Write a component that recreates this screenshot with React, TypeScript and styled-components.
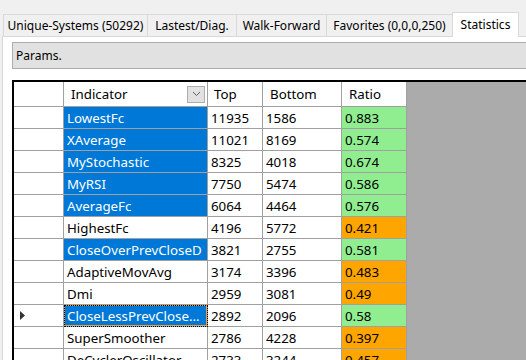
import { FC } from "react";
import styled, { createGlobalStyle } from "styled-components";

const GlobalStyle = createGlobalStyle`
  html, body {
    margin: 0;
    padding: 0;
  }
  body {
    width: 526px;
    height: 360px;
    overflow: hidden;
    background: #f0f0f0;
    font-family: "Noto Sans", "Open Sans", sans-serif;
    font-size: 12px;
    color: #000;
  }
`;

const Window = styled.div`
  width: 560px;
  height: 360px;
  display: flex;
  flex-direction: column;
`;

const TabStrip = styled.div`
  display: flex;
  align-items: flex-end;
  height: 36px;
  padding-left: 4px;
  box-sizing: border-box;
`;

const Tab = styled.div<{ $w: number; $active?: boolean }>`
  box-sizing: border-box;
  width: ${(p) => p.$w}px;
  height: ${(p) => (p.$active ? 25 : 22)}px;
  margin-left: -1px;
  margin-bottom: ${(p) => (p.$active ? -1 : 0)}px;
  border: 1px solid #d9d9d9;
  border-bottom: none;
  background: ${(p) => (p.$active ? "#fff" : "#f0f0f0")};
  display: flex;
  align-items: center;
  justify-content: center;
  padding-bottom: ${(p) => (p.$active ? 2 : 0)}px;
  white-space: nowrap;
  position: relative;
  z-index: ${(p) => (p.$active ? 1 : 0)};
`;

const Content = styled.div`
  flex: 1;
  margin-left: 2px;
  background: #fff;
  border-left: 1px solid #d9d9d9;
  border-top: 1px solid #d9d9d9;
  padding: 5px 0 0 9px;
  display: flex;
  flex-direction: column;
  min-height: 0;
`;

const ParamsBar = styled.div`
  box-sizing: border-box;
  height: 27px;
  background: #e1e1e1;
  border: 1px solid #adadad;
  display: flex;
  align-items: center;
  padding-left: 3px;
`;

const Grid = styled.div`
  margin-top: 11px;
  flex: 1;
  background: #ababab;
  border-top: 2px solid #000;
  border-left: 2px solid #000;
  overflow: hidden;
  display: flex;
  flex-direction: column;
  align-items: flex-start;
  font-size: 13.3px;
`;

const Row = styled.div<{ $h: number }>`
  display: flex;
  height: ${(p) => p.$h}px;
  flex-shrink: 0;
`;

const Cell = styled.div<{ $w: number; $bg?: string; $sel?: boolean; $focus?: boolean; $pad?: number }>`
  box-sizing: border-box;
  width: ${(p) => p.$w}px;
  height: 100%;
  border-right: 1px solid #a0a0a0;
  border-bottom: 1px solid #a0a0a0;
  background: ${(p) => (p.$sel ? "#0078d7" : p.$bg ?? "#fff")};
  color: ${(p) => (p.$sel ? "#fff" : "#000")};
  padding-left: ${(p) => p.$pad ?? 3}px;
  display: flex;
  align-items: center;
  white-space: nowrap;
  overflow: hidden;
  ${(p) =>
    p.$focus &&
    `
    outline: 1px dotted #000;
    outline-offset: -1px;
    box-shadow: inset 0 0 0 1px #f0a040;
  `}
`;

const HeaderCell = styled(Cell)`
  justify-content: space-between;
  padding-right: 2px;
`;

const RowHeader = styled(Cell)`
  padding-left: 6px;
`;

const DropButton = styled.div`
  box-sizing: border-box;
  width: 18px;
  height: 17px;
  background: #e1e1e1;
  border: 1px solid #adadad;
  display: flex;
  align-items: center;
  justify-content: center;
`;

const COLS = { head: 50, ind: 144, top: 55, bottom: 79, ratio: 65 };

interface StatRow {
  name: string;
  top: number;
  bottom: number;
  ratio: string;
  sel?: boolean;
  focus?: boolean;
}

const ROWS: StatRow[] = [
  { name: "LowestFc", top: 11935, bottom: 1586, ratio: "0.883", sel: true },
  { name: "XAverage", top: 11021, bottom: 8169, ratio: "0.574", sel: true },
  { name: "MyStochastic", top: 8325, bottom: 4018, ratio: "0.674", sel: true },
  { name: "MyRSI", top: 7750, bottom: 5474, ratio: "0.586", sel: true },
  { name: "AverageFc", top: 6064, bottom: 4464, ratio: "0.576", sel: true },
  { name: "HighestFc", top: 4196, bottom: 5772, ratio: "0.421" },
  { name: "CloseOverPrevCloseD", top: 3821, bottom: 2755, ratio: "0.581", sel: true },
  { name: "AdaptiveMovAvg", top: 3174, bottom: 3396, ratio: "0.483" },
  { name: "Dmi", top: 2959, bottom: 3081, ratio: "0.49" },
  { name: "CloseLessPrevClose...", top: 2892, bottom: 2096, ratio: "0.58", sel: true, focus: true },
  { name: "SuperSmoother", top: 2786, bottom: 4228, ratio: "0.397" },
  { name: "DeCyclerOscillator", top: 2733, bottom: 3244, ratio: "0.457" },
];

const TABS = [
  { label: "Unique-Systems (50292)", w: 145 },
  { label: "Lastest/Diag.", w: 90 },
  { label: "Walk-Forward", w: 91 },
  { label: "Favorites (0,0,0,250)", w: 127 },
  { label: "Statistics", w: 67, active: true },
];

const ratioColor = (r: string) => (parseFloat(r) >= 0.5 ? "#90ee90" : "#ffa500");

const App: FC = () => {
  return (
    <Window>
      <GlobalStyle />
      <TabStrip>
        {TABS.map((t) => (
          <Tab key={t.label} $w={t.w} $active={t.active}>
            {t.label}
          </Tab>
        ))}
      </TabStrip>
      <Content>
        <ParamsBar>Params.</ParamsBar>
        <Grid>
          <Row $h={25}>
            <RowHeader $w={COLS.head} />
            <HeaderCell $w={COLS.ind} $pad={7}>
              Indicator
              <DropButton>
                <svg width="9" height="6" viewBox="0 0 9 6">
                  <path d="M1 1 L4.5 4.5 L8 1" fill="none" stroke="#606060" strokeWidth="1" />
                </svg>
              </DropButton>
            </HeaderCell>
            <Cell $w={COLS.top} $pad={6}>Top</Cell>
            <Cell $w={COLS.bottom} $pad={7}>Bottom</Cell>
            <Cell $w={COLS.ratio} $pad={7}>Ratio</Cell>
          </Row>
          {ROWS.map((r) => (
            <Row $h={22} key={r.name}>
              <RowHeader $w={COLS.head}>
                {r.focus && (
                  <svg width="5" height="9" viewBox="0 0 5 9">
                    <path d="M0 0 L5 4.5 L0 9 Z" fill="#333" />
                  </svg>
                )}
              </RowHeader>
              <Cell $w={COLS.ind} $sel={r.sel} $focus={r.focus}>
                {r.name}
              </Cell>
              <Cell $w={COLS.top}>{r.top}</Cell>
              <Cell $w={COLS.bottom}>{r.bottom}</Cell>
              <Cell $w={COLS.ratio} $bg={ratioColor(r.ratio)}>
                {r.ratio}
              </Cell>
            </Row>
          ))}
        </Grid>
      </Content>
    </Window>
  );
};

export default App;
